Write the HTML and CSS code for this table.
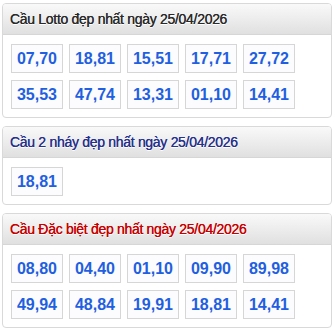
FILE: index.html
```html
<!DOCTYPE html>
<html lang="vi">
<head>
<meta charset="utf-8">
<link rel="stylesheet" href="styles.css">
</head>
<body>
<div class="panel">
  <div class="head">Cầu Lotto đẹp nhất ngày 25/04/2026</div>
  <div class="grid">
    <span class="num">07,70</span><span class="num">18,81</span><span class="num">15,51</span><span class="num">17,71</span><span class="num">27,72</span>
    <span class="num">35,53</span><span class="num">47,74</span><span class="num">13,31</span><span class="num">01,10</span><span class="num">14,41</span>
  </div>
</div>
<div class="panel">
  <div class="head blue">Cầu 2 nháy đẹp nhất ngày 25/04/2026</div>
  <div class="grid">
    <span class="num">18,81</span>
  </div>
</div>
<div class="panel">
  <div class="head red">Cầu Đặc biệt đẹp nhất ngày 25/04/2026</div>
  <div class="grid">
    <span class="num">08,80</span><span class="num">04,40</span><span class="num">01,10</span><span class="num">09,90</span><span class="num">89,98</span>
    <span class="num">49,94</span><span class="num">48,84</span><span class="num">19,91</span><span class="num">18,81</span><span class="num">14,41</span>
  </div>
</div>
</body>
</html>
```
FILE: styles.css
```css
html, body { margin: 0; padding: 0; background: #fff; }
body {
  padding: 3px 2px;
  font-family: "Liberation Sans", Arial, sans-serif;
  display: flex;
  flex-direction: column;
  gap: 8px;
}
.panel {
  border: 1px solid #d9d9d9;
  border-radius: 4px;
  overflow: hidden;
  background: #fff;
}
.head {
  height: 31px;
  box-sizing: border-box;
  padding: 0 0 0 7px;
  line-height: 31px;
  font-size: 14px;
  letter-spacing: -0.3px;
  color: #2a2a2a;
  text-shadow: 0 0 0.4px currentColor, 0 1px 0 #fff;
  background: linear-gradient(#f9f9f9, #e0e0e0);
  border-bottom: 1px solid #d6d6d6;
}
.head.blue { color: #27318c; }
.head.red { color: #c80000; }
.grid {
  display: flex;
  flex-wrap: wrap;
  gap: 7px 6px;
  padding: 9px 8px 8px 8px;
}
.num {
  width: 50px;
  height: 27px;
  border: 1px solid #d6d6d6;
  background: #fcfcfe;
  color: #1f5fe0;
  font-weight: bold;
  font-size: 16px;
  line-height: 27px;
  text-align: center;
}
```
